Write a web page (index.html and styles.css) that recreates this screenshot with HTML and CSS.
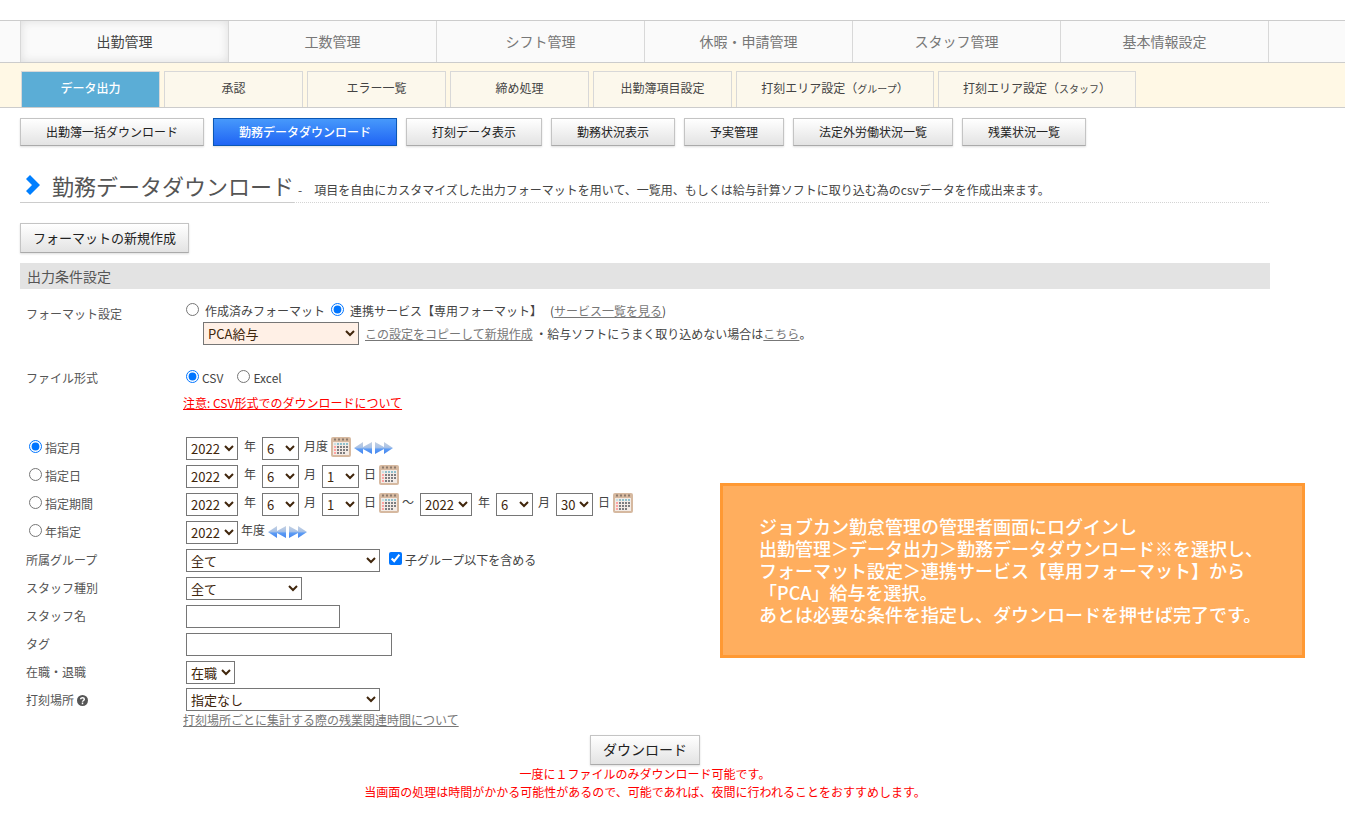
FILE: index.html
```html
<!DOCTYPE html>
<html lang="ja">
<head>
<meta charset="utf-8">
<title>勤務データダウンロード</title>
<link rel="stylesheet" href="styles.css">
</head>
<body>
<svg class="defs" aria-hidden="true">
  <defs>
    <linearGradient id="blue" x1="0" y1="0" x2="0" y2="1">
      <stop offset="0" stop-color="#c3d0e2"/>
      <stop offset="0.45" stop-color="#a9c2e6"/>
      <stop offset="0.6" stop-color="#5b9bf5"/>
      <stop offset="1" stop-color="#4585ee"/>
    </linearGradient>
    <symbol id="cal" viewBox="0 0 20 20">
      <rect width="20" height="20" rx="2" fill="#d6b9a0"/>
      <rect x="2" y="5" width="16" height="13" fill="#f3ebe5"/>
      <path d="M3 2.5h2M7 2.5h2M11 2.5h2M15 2.5h2" stroke="#8c7a6c" stroke-width="2"/>
      <path d="M6 7h12" stroke="#8fc0cc" stroke-width="2" stroke-dasharray="2 1"/>
      <path d="M3 7h2" stroke="#c9dfe3" stroke-width="2"/>
      <path d="M4 9v9" stroke="#ffa3a3" stroke-width="2" stroke-dasharray="2 1"/>
      <path d="M6 10h12M6 13h12M6 16h9" stroke="#7d7d80" stroke-width="2" stroke-dasharray="2 1"/>
    </symbol>
    <symbol id="prev" viewBox="0 0 18 14">
      <path d="M0 7L9 1V6L18 1V13L9 8V13Z" fill="url(#blue)"/>
    </symbol>
    <symbol id="next" viewBox="0 0 18 14">
      <path d="M18 7L9 1V6L0 1V13L9 8V13Z" fill="url(#blue)"/>
    </symbol>
  </defs>
</svg>

<nav class="main-nav">
  <a class="active" href="#">出勤管理</a>
  <a href="#">工数管理</a>
  <a href="#">シフト管理</a>
  <a href="#">休暇・申請管理</a>
  <a href="#">スタッフ管理</a>
  <a href="#">基本情報設定</a>
</nav>
<nav class="sub-nav">
  <a class="active" href="#">データ出力</a>
  <a href="#">承認</a>
  <a href="#">エラー一覧</a>
  <a href="#">締め処理</a>
  <a href="#">出勤簿項目設定</a>
  <a class="wide" href="#">打刻エリア設定（<small>グループ</small>）</a>
  <a class="wide" href="#">打刻エリア設定（<small>スタッフ</small>）</a>
</nav>

<main class="page">
  <div class="menu">
    <button type="button">出勤簿一括ダウンロード</button>
    <button type="button" class="active">勤務データダウンロード</button>
    <button type="button">打刻データ表示</button>
    <button type="button">勤務状況表示</button>
    <button type="button">予実管理</button>
    <button type="button">法定外労働状況一覧</button>
    <button type="button">残業状況一覧</button>
  </div>

  <header class="title">
    <h1><svg class="chevron" viewBox="0 0 14 20" aria-hidden="true"><path d="M0 4L4 0L14 10L4 20L0 16L6 10Z" fill="#007fff"/></svg>勤務データダウンロード</h1>
    <p>-　項目を自由にカスタマイズした出力フォーマットを用いて、一覧用、もしくは給与計算ソフトに取り込む為のcsvデータを作成出来ます。</p>
  </header>

  <button type="button" class="btn create">フォーマットの新規作成</button>

  <h2>出力条件設定</h2>

  <form class="form">
    <div class="row format">
      <span class="label">フォーマット設定</span>
      <div>
        <div class="line spaced">
          <label><input type="radio" name="fmt">作成済みフォーマット</label>
          <label><input type="radio" name="fmt" checked>連携サービス【専用フォーマット】</label>
          <span class="note">(<a href="#">サービス一覧を見る</a>)</span>
        </div>
        <div class="line service">
          <select class="peach" aria-label="連携サービス"><option>PCA給与</option></select>
          <span><a href="#">この設定をコピーして新規作成</a> ・給与ソフトにうまく取り込めない場合は<a href="#">こちら</a>。</span>
        </div>
      </div>
    </div>

    <div class="row filetype">
      <span class="label">ファイル形式</span>
      <div>
        <div class="line types">
          <label><input type="radio" name="type" checked>CSV</label>
          <label><input type="radio" name="type">Excel</label>
        </div>
        <a class="warn" href="#">注意: CSV形式でのダウンロードについて</a>
      </div>
    </div>

    <div class="row">
      <label class="pick"><input type="radio" name="term" checked>指定月</label>
      <div class="line">
        <select class="year" aria-label="年"><option>2022</option></select><span class="unit">年</span>
        <select class="num" aria-label="月"><option>6</option></select><span class="unit end">月度</span>
        <svg class="cal"><use href="#cal"/></svg><svg class="arrow"><use href="#prev"/></svg><svg class="arrow"><use href="#next"/></svg>
      </div>
    </div>
    <div class="row">
      <label class="pick"><input type="radio" name="term">指定日</label>
      <div class="line">
        <select class="year" aria-label="年"><option>2022</option></select><span class="unit">年</span>
        <select class="num" aria-label="月"><option>6</option></select><span class="unit">月</span>
        <select class="num" aria-label="日"><option>1</option></select><span class="unit end">日</span>
        <svg class="cal"><use href="#cal"/></svg>
      </div>
    </div>
    <div class="row">
      <label class="pick"><input type="radio" name="term">指定期間</label>
      <div class="line">
        <select class="year" aria-label="開始年"><option>2022</option></select><span class="unit">年</span>
        <select class="num" aria-label="開始月"><option>6</option></select><span class="unit">月</span>
        <select class="num" aria-label="開始日"><option>1</option></select><span class="unit end">日</span>
        <svg class="cal"><use href="#cal"/></svg><span class="unit start">～</span>
        <select class="year" aria-label="終了年"><option>2022</option></select><span class="unit">年</span>
        <select class="num" aria-label="終了月"><option>6</option></select><span class="unit">月</span>
        <select class="num" aria-label="終了日"><option>30</option></select><span class="unit end">日</span>
        <svg class="cal"><use href="#cal"/></svg>
      </div>
    </div>
    <div class="row">
      <label class="pick"><input type="radio" name="term">年指定</label>
      <div class="line">
        <select class="year" aria-label="年度"><option>2022</option></select><span class="unit start end">年度</span>
        <svg class="arrow first"><use href="#prev"/></svg><svg class="arrow"><use href="#next"/></svg>
      </div>
    </div>
    <div class="row">
      <label class="label" for="group">所属グループ</label>
      <div class="line">
        <select id="group" class="long"><option>全て</option></select>
        <label class="sub"><input type="checkbox" checked>子グループ以下を含める</label>
      </div>
    </div>
    <div class="row">
      <label class="label" for="kind">スタッフ種別</label>
      <div class="line"><select id="kind" class="kind"><option>全て</option></select></div>
    </div>
    <div class="row">
      <label class="label" for="name">スタッフ名</label>
      <div class="line"><input type="text" id="name" class="name"></div>
    </div>
    <div class="row">
      <label class="label" for="tag">タグ</label>
      <div class="line"><input type="text" id="tag" class="tag"></div>
    </div>
    <div class="row">
      <label class="label" for="status">在職・退職</label>
      <div class="line"><select id="status" class="status"><option>在職</option></select></div>
    </div>
    <div class="row place">
      <label class="label" for="place">打刻場所 <svg class="help" viewBox="0 0 12 12" aria-hidden="true"><circle cx="6" cy="6" r="6" fill="#555"/><path d="M4 4.6C4 2.6 8 2.6 8 4.7C8 6 6 6 6 7.4M6 8.3V10" fill="none" stroke="#fff" stroke-width="1.6"/></svg></label>
      <div>
        <div class="line"><select id="place" class="long"><option>指定なし</option></select></div>
        <a href="#">打刻場所ごとに集計する際の残業関連時間について</a>
      </div>
    </div>

    <div class="submit">
      <button type="button" class="btn download">ダウンロード</button>
      <p>一度に１ファイルのみダウンロード可能です。</p>
      <p>当画面の処理は時間がかかる可能性があるので、可能であれば、夜間に行われることをおすすめします。</p>
    </div>
  </form>
</main>

<aside class="callout">ジョブカン勤怠管理の管理者画面にログインし<br>出勤管理＞データ出力＞勤務データダウンロード※を選択し、<br>フォーマット設定＞連携サービス【専用フォーマット】から<br>「PCA」給与を選択。<br>あとは必要な条件を指定し、ダウンロードを押せば完了です。</aside>
</body>
</html>
```
FILE: styles.css
```css
* {
  box-sizing: border-box;
}

body {
  position: relative;
  margin: 0;
  padding-top: 20px;
  background: #fff;
  color: #444;
  font: 12px/18px "Noto Sans CJK JP", sans-serif;
}

button,
select,
input {
  font-family: inherit;
}

h1,
h2,
p {
  margin: 0;
  font-weight: 400;
}

a {
  color: #777;
}

.defs {
  position: absolute;
  width: 0;
  height: 0;
}

/* Navigation */
.main-nav {
  display: flex;
  padding-left: 20px;
  border: solid #ccc;
  border-width: 1px 0;
  background: #fafafa;
}

.main-nav a {
  width: 208px;
  border-right: 1px solid #d8d8d8;
  color: #777;
  font-size: 14px;
  line-height: 41px;
  text-align: center;
  text-decoration: none;
}

.main-nav .active {
  width: 209px;
  border-left: 1px solid #d8d8d8;
  box-shadow: inset 0 0 10px #ddd;
  color: #444;
}

.sub-nav {
  display: flex;
  gap: 4px;
  padding: 8px 0 0 21px;
  border-bottom: 1px solid #ccc;
  background: #fff8e5;
}

.sub-nav a {
  width: 139px;
  padding-bottom: 2px;
  border: 1px solid #d8d8d8;
  border-bottom: 0;
  background: #fcf8ec;
  color: #444;
  line-height: 32px;
  text-align: center;
  text-decoration: none;
  white-space: nowrap;
}

.sub-nav .wide {
  width: 198px;
}

.sub-nav small {
  font-size: 10px;
}

.sub-nav .active {
  background: #5badd6;
  color: #fff;
  font-weight: 500;
}

/* Page */
.page {
  max-width: 1250px;
  margin-left: 20px;
}

.menu {
  display: flex;
  flex-wrap: wrap;
  gap: 9px;
  padding-top: 10px;
}

.menu button,
.btn {
  border: 1px solid #c4c4c4;
  border-bottom-color: #aaa;
  background: linear-gradient(#fff, #e3e3e3);
  box-shadow: 0 1px 2px #ddd;
  color: #222;
}

.menu button {
  height: 28px;
  padding: 0 25px 2px;
  font-size: 12px;
}

.menu .active {
  border-color: #0a57b5;
  background: linear-gradient(#4799fb, #2064f4);
  color: #fff;
  font-weight: 500;
}

.title {
  display: flex;
  align-items: last baseline;
  margin-top: 24px;
  background: linear-gradient(90deg, #d4d4d4 50%, transparent 50%) 0 100% / 2px 1px repeat-x;
}

.title h1 {
  display: flex;
  align-items: center;
  gap: 12px;
  padding: 0 0 2px 6px;
  border-bottom: 1px solid #ccc;
  color: #555;
  font-size: 22px;
  line-height: 30px;
}

.chevron {
  width: 14px;
  height: 20px;
}

.title p {
  padding-left: 4px;
}

.btn {
  display: block;
  height: 30px;
  padding: 0 12px 2px;
}

.create {
  margin-top: 20px;
  font-size: 13px;
}

h2 {
  margin-top: 10px;
  padding-left: 7px;
  background: #e3e3e3;
  color: #555;
  font-size: 14px;
  line-height: 26px;
}

/* Form */
.form {
  padding: 13px 0 14px;
}

.row {
  display: grid;
  grid-template-columns: 160px 1fr;
  align-items: center;
  min-height: 28px;
  padding-left: 6px;
}

.row .label,
.pick {
  color: #555;
}

.pick {
  padding-left: 3px;
}

.row label:has(input),
.line {
  display: flex;
  align-items: center;
}

input[type="radio"],
input[type="checkbox"] {
  width: 13px;
  height: 13px;
  margin: 0 3px 4px 0;
}

.format,
.filetype,
.place {
  align-items: start;
}

.format .label {
  padding-top: 3px;
}

.format {
  margin-bottom: 24px;
}

.filetype {
  margin-bottom: 22px;
}

.spaced {
  gap: 6px;
  padding-bottom: 2px;
}

.spaced input {
  margin-right: 6px;
}

.note {
  padding-left: 2px;
}

.service {
  gap: 6px;
  padding-left: 17px;
}

.types {
  gap: 14px;
  margin-bottom: 7px;
}

.row .warn,
.submit p {
  color: #f00;
}

.row .warn,
.place a {
  margin-left: -3px;
}

select,
input[type="text"] {
  height: 23px;
  margin: 0;
  padding: 0;
  border: 1px solid #767676;
  border-radius: 0;
  background-color: #fff;
  color: #40260c;
  font-size: 13px;
}

select.peach {
  width: 156px;
  background-color: #fff0e6;
}

.year {
  width: 52px;
}

.num {
  width: 37px;
}

.long {
  width: 194px;
}

.kind {
  width: 116px;
}

input.name {
  width: 154px;
}

input.tag {
  width: 206px;
}

.status {
  width: 49px;
}

.unit {
  padding: 0 6px 4px;
}

.num + .unit {
  padding-left: 5px;
}

.unit.start {
  padding-left: 3px;
}

.unit.end {
  padding-right: 3px;
}

.cal {
  width: 20px;
  height: 20px;
  margin-bottom: 2px;
}

.arrow {
  width: 18px;
  height: 14px;
  margin-left: 3px;
}

.arrow.first {
  margin-left: 0;
}

.sub {
  padding-left: 9px;
}

.place {
  padding-top: 2px;
}

.place .label {
  padding-top: 3px;
}

.place a {
  display: inline-block;
}

.help {
  width: 11px;
  height: 11px;
  vertical-align: -1px;
}

.submit {
  margin-top: 6px;
  text-align: center;
}

.download {
  margin: 0 auto;
  font-size: 14px;
}

/* Note laid over the form */
.callout {
  position: absolute;
  top: 483px;
  left: 720px;
  width: 585px;
  padding: 29px 0 30px 36px;
  border: 3px solid #ff9933;
  background: #ffae5e;
  color: #fff;
  font-size: 18px;
  font-weight: 500;
  line-height: 22px;
  white-space: nowrap;
}
```
